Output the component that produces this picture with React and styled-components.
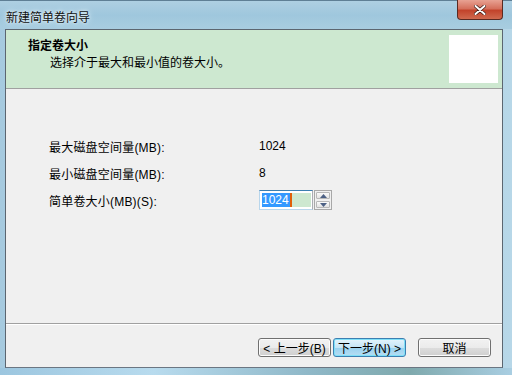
import React from 'react'
import styled, {createGlobalStyle} from 'styled-components'

const GlobalStyle = createGlobalStyle`
  html, body {
    margin: 0;
    padding: 0;
    background: #9fc6dc;
  }
  * { box-sizing: border-box; }
`

const font = `"Liberation Sans", "Noto Sans CJK SC", sans-serif`

const Window = styled.div`
  width: 512px;
  height: 375px;
  display: flex;
  flex-direction: column;
  background: linear-gradient(90deg, #a6cadf 0%, #b4d4e6 30%, #a9cee2 60%, #b7d7e8 100%);
  font-family: ${font};
  font-size: 12px;
  color: #000;
  overflow: hidden;
`

const TitleBar = styled.div`
  height: 29px;
  display: flex;
  align-items: flex-start;
  justify-content: space-between;
  padding-left: 6px;
  background: linear-gradient(180deg, #aecfe2 0%, #9fc7dd 50%, #a8cde0 100%);
  border-top: 1px solid #5f7f95;
`

const Title = styled.div`
  margin-top: 7px;
  font-size: 12px;
  color: #111;
  text-shadow: 0 0 6px #e8f4fb, 0 0 3px #eef7fc;
`

const CloseButton = styled.div`
  width: 46px;
  height: 20px;
  margin-right: 9px;
  margin-top: -1px;
  border: 1px solid #5a2a22;
  border-top: none;
  border-radius: 0 0 4px 4px;
  background: linear-gradient(180deg, #e8a293 0%, #d5705c 45%, #c2432b 55%, #d06a4f 100%);
  display: flex;
  align-items: center;
  justify-content: center;
`

const Client = styled.div`
  height: 339px;
  margin: 0 9px 0 5px;
  background: #f0f0f0;
  border: 1px solid #5c6670;
  border-bottom-color: #6b7682;
  display: flex;
  flex-direction: column;
`

const Header = styled.div`
  height: 59px;
  background: #cde8d0;
  border-bottom: 1px solid #a0a0a0;
  display: flex;
  justify-content: space-between;
  padding: 5px 4px 4px 22px;
`

const HeaderText = styled.div`
  display: flex;
  flex-direction: column;
  padding-top: 3px;
`

const HeaderTitle = styled.div`
  font-weight: bold;
  font-size: 12px;
  line-height: 17px;
`

const HeaderSub = styled.div`
  padding-left: 22px;
  line-height: 17px;
`

const Logo = styled.div`
  width: 49px;
  height: 48px;
  background: #fff;
`

const Body = styled.div`
  flex: 1;
  display: flex;
  flex-direction: column;
  gap: 7px;
  padding: 47px 0 0 43px;
  border-bottom: 1px solid #a0a0a0;
`

const Row = styled.div`
  display: flex;
  align-items: center;
  height: 20px;
  margin-top: ${p => p.$gap || 0}px;
`

const Label = styled.div`
  width: 210px;
  letter-spacing: 0.2px;
`

const Value = styled.div``

const Spin = styled.div`
  display: flex;
  align-items: center;
  gap: 1px;
`

const SpinInput = styled.div`
  width: 54px;
  height: 20px;
  border: 1px solid #abadb3;
  border-top-color: #3c7fb1;
  border-left-color: #b8d6ec;
  border-bottom-color: #b8d6ec;
  background: #fff;
  padding: 2px 1px 2px 2px;
  display: flex;
`

const Selected = styled.span`
  background: #3399ff;
  color: #fff;
  line-height: 14px;
  padding: 0 1px 0 0;
  border-right: 2px solid #e0600a;
`

const Fill = styled.span`
  flex: 1;
  background: #cde8d0;
`

const SpinButtons = styled.div`
  display: flex;
  flex-direction: column;
  gap: 2px;
  border: 1px solid #a8a8a8;
  padding: 1px;
  background: #f0f0f0;
`

const SpinBtn = styled.div`
  width: 14px;
  height: 7px;
  border: 1px solid #b8b8b8;
  border-radius: 1px;
  background: linear-gradient(180deg, #fbfbfb, #e2e2e2);
  display: flex;
  align-items: center;
  justify-content: center;
`

const Footer = styled.div`
  height: 43px;
  border-top: 1px solid #fff;
  display: flex;
  justify-content: flex-end;
  align-items: flex-start;
  padding: 13px 11px 0 0;
`

const Button = styled.div`
  width: 73px;
  height: 19px;
  margin-left: ${p => p.$ml || 0}px;
  border: 1px solid ${p => (p.$focus ? '#3c7fb1' : '#707070')};
  border-radius: 3px;
  background: ${p =>
    p.$focus
      ? 'linear-gradient(180deg, #e5f4fc 0%, #c4e5f6 50%, #98d1ef 51%, #b6def3 100%)'
      : 'linear-gradient(180deg, #f2f2f2 0%, #ebebeb 50%, #dddddd 51%, #cfcfcf 100%)'};
  box-shadow: inset 0 0 0 1px ${p => (p.$focus ? '#7ee0f8' : '#fcfcfc')};
  display: flex;
  align-items: center;
  justify-content: center;
  font-size: 12px;
  white-space: nowrap;
`

const BottomFrame = styled.div`
  flex: 1;
  background: linear-gradient(90deg, #9cc6df 0%, #b8dbee 30%, #8fb8c8 60%, #7fa9ad 80%, #a9cee2 100%);
`

const Arrow = ({up}) => (
  <svg width="7" height="4" viewBox="0 0 7 4">
    <path d={up ? 'M0 4 L3.5 0 L7 4 Z' : 'M0 0 L3.5 4 L7 0 Z'} fill="#4d6185" />
  </svg>
)

export default function App() {
  return (
    <>
      <GlobalStyle />
      <Window>
        <TitleBar>
          <Title>新建简单卷向导</Title>
          <CloseButton>
            <svg width="12" height="10" viewBox="0 0 12 10">
              <path d="M1.5 1 L10.5 9 M10.5 1 L1.5 9" stroke="#3b1a14" strokeWidth="3.4" strokeLinecap="round" />
              <path d="M1.5 1 L10.5 9 M10.5 1 L1.5 9" stroke="#fff" strokeWidth="2" strokeLinecap="round" />
            </svg>
          </CloseButton>
        </TitleBar>
        <Client>
          <Header>
            <HeaderText>
              <HeaderTitle>指定卷大小</HeaderTitle>
              <HeaderSub>选择介于最大和最小值的卷大小。</HeaderSub>
            </HeaderText>
            <Logo />
          </Header>
          <Body>
            <Row>
              <Label>最大磁盘空间量(MB):</Label>
              <Value>1024</Value>
            </Row>
            <Row>
              <Label>最小磁盘空间量(MB):</Label>
              <Value>8</Value>
            </Row>
            <Row>
              <Label>简单卷大小(MB)(S):</Label>
              <Spin>
                <SpinInput>
                  <Selected>1024</Selected>
                  <Fill />
                </SpinInput>
                <SpinButtons>
                  <SpinBtn><Arrow up /></SpinBtn>
                  <SpinBtn><Arrow /></SpinBtn>
                </SpinButtons>
              </Spin>
            </Row>
          </Body>
          <Footer>
            <Button>&lt; 上一步(B)</Button>
            <Button $ml={2} $focus>下一步(N) &gt;</Button>
            <Button $ml={12}>取消</Button>
          </Footer>
        </Client>
        <BottomFrame />
      </Window>
    </>
  )
}
